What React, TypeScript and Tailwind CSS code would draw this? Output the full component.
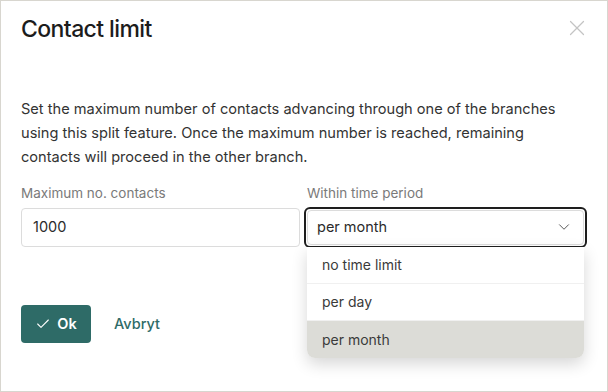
import { Check, ChevronDown, X } from "lucide-react";

const options = ["no time limit", "per day", "per month"];

export default function App() {
  return (
    <div
      className="w-[608px] h-[392px] bg-white border border-[#d8d6cf] relative overflow-hidden text-[#2b2b2b]"
      style={{ fontFamily: "Inter, 'Noto Sans', sans-serif" }}
    >
      <div className="flex items-start justify-between pl-5 pr-[17px] pt-[11px]">
        <h1 className="text-[23px] font-medium tracking-[-0.6px] text-[#1c1c1c]">Contact limit</h1>
        <button className="mt-[3px] text-[#c4c4c4]">
          <X className="w-[26px] h-[26px]" strokeWidth={1.1} />
        </button>
      </div>

      <p className="mt-[50px] px-5 text-[14.6px] leading-6 text-[#333]">
        Set the maximum number of contacts advancing through one of the branches
        <br />
        using this split feature. Once the maximum number is reached, remaining
        <br />
        contacts will proceed in the other branch.
      </p>

      <div className="mt-[14px] flex gap-[4px] px-5">
        <div className="w-[279px] flex flex-col">
          <label className="text-[13.5px] text-[#7a7a7a] leading-5">Maximum no. contacts</label>
          <div className="mt-[5px] h-[39px] border border-[#dcdcdc] rounded-[4px] flex items-center px-[11px] text-[14.5px] text-[#2b2b2b]">
            1000
          </div>
        </div>
        <div className="flex-1 flex flex-col relative">
          <label className="pl-[3px] text-[13.5px] text-[#7a7a7a] leading-5">Within time period</label>
          <div className="mt-[4px] h-[41px] rounded-[6px] border-2 border-[#1e1e1e] p-[1px]">
            <div className="h-full border border-[#dcdcdc] rounded-[4px] flex items-center justify-between pl-[9px] pr-[10px] text-[14.5px] text-[#2b2b2b]">
              <span>per month</span>
              <ChevronDown className="w-[18px] h-[18px] text-[#555]" strokeWidth={1.3} />
            </div>
          </div>
          <div className="absolute left-[3px] right-[3px] top-[64px] bg-white rounded-b-[8px] shadow-[0_6px_16px_rgba(0,0,0,0.16)] overflow-hidden">
            {options.map((o, i) => (
              <div
                key={o}
                className={`h-[37px] flex items-center pl-[15px] text-[14px] text-[#3a3a3a] ${
                  i < 2 ? "border-b border-[#f0f0f0]" : ""
                } ${o === "per month" ? "bg-[#dcdcd7]" : "bg-white"}`}
              >
                {o}
              </div>
            ))}
          </div>
        </div>
      </div>

      <div className="mt-[57px] px-5 flex items-center gap-[23px]">
        <button className="w-[70px] h-[38px] rounded-[4px] bg-[#2e6b67] text-white flex items-center justify-center gap-[6px] text-[14.5px] font-semibold">
          <Check className="w-[16px] h-[16px]" strokeWidth={1.6} />
          Ok
        </button>
        <button className="text-[14.5px] font-medium text-[#2e6b67]">Avbryt</button>
      </div>
    </div>
  );
}
